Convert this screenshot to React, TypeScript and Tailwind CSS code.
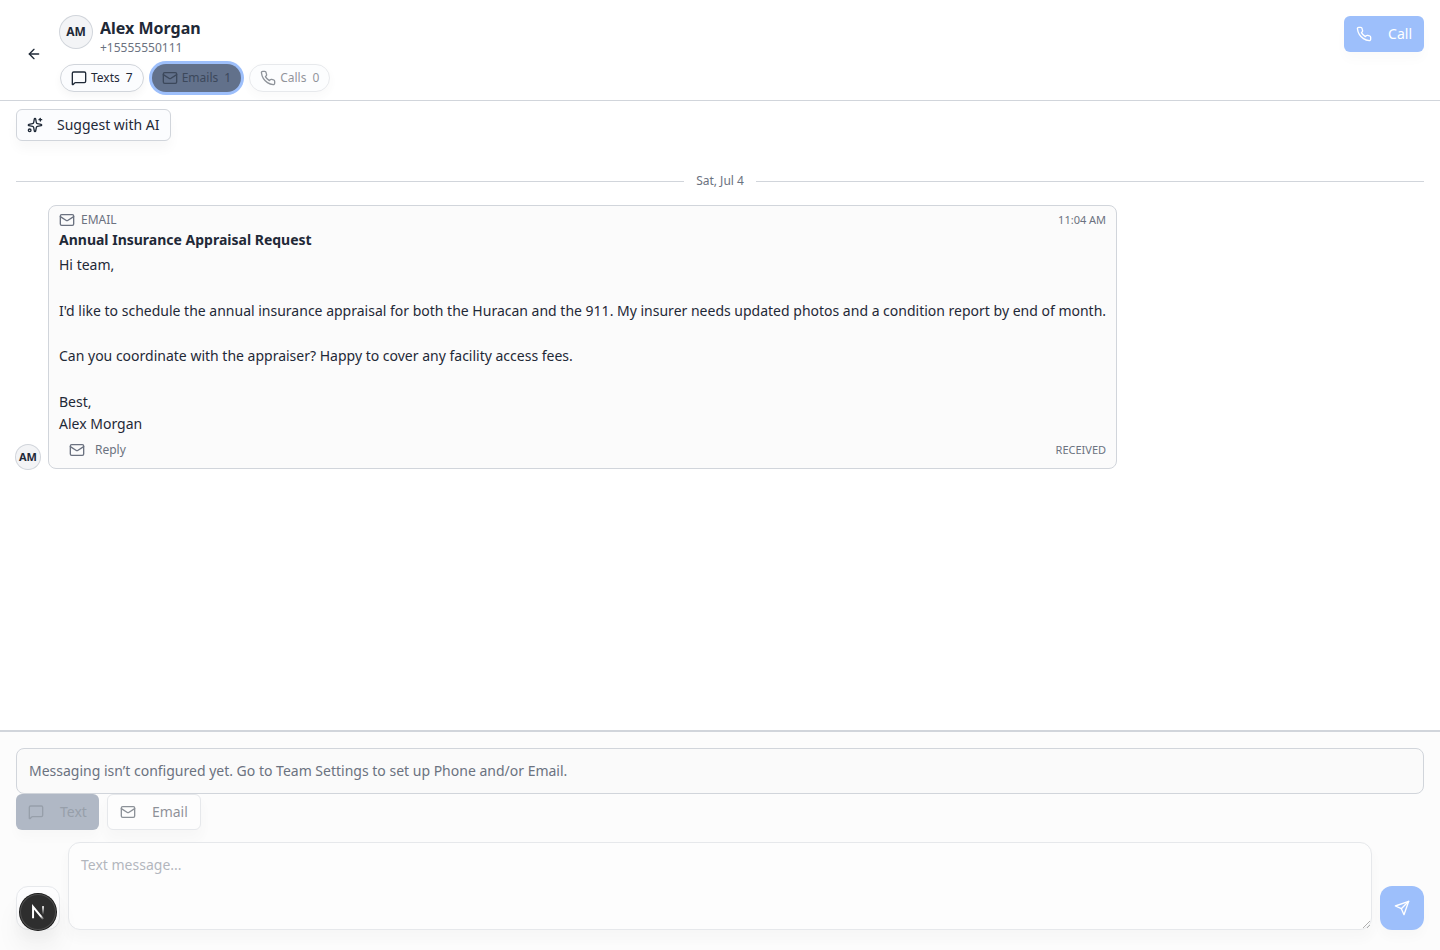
import type { ReactNode } from 'react';
import { ArrowLeft, Sparkles } from 'lucide-react';

interface IconProps {
  className?: string;
}

function Icon({ className = 'size-4', children }: IconProps & { children: ReactNode }) {
  return (
    <svg
      viewBox="0 0 24 24"
      fill="none"
      stroke="currentColor"
      strokeWidth={2}
      strokeLinecap="round"
      strokeLinejoin="round"
      aria-hidden="true"
      className={`shrink-0 ${className}`}
    >
      {children}
    </svg>
  );
}

function MessageIcon({ className }: IconProps) {
  return (
    <Icon className={className}>
      <path d="M22 17a2 2 0 0 1-2 2H6.828a2 2 0 0 0-1.414.586l-2.202 2.202A.71.71 0 0 1 2 21.286V5a2 2 0 0 1 2-2h16a2 2 0 0 1 2 2z" />
    </Icon>
  );
}

function MailIcon({ className }: IconProps) {
  return (
    <Icon className={className}>
      <path d="m22 7-8.991 5.727a2 2 0 0 1-2.009 0L2 7" />
      <rect x="2" y="4" width="20" height="16" rx="2" />
    </Icon>
  );
}

function PhoneIcon({ className }: IconProps) {
  return (
    <Icon className={className}>
      <path d="M22 16.92v3a2 2 0 0 1-2.18 2 19.79 19.79 0 0 1-8.63-3.07 19.5 19.5 0 0 1-6-6 19.79 19.79 0 0 1-3.07-8.67A2 2 0 0 1 4.11 2h3a2 2 0 0 1 2 1.72c.127.96.361 1.903.7 2.81a2 2 0 0 1-.45 2.11L8.09 9.91a16 16 0 0 0 6 6l1.27-1.27a2 2 0 0 1 2.11-.45c.907.339 1.85.573 2.81.7A2 2 0 0 1 22 16.92z" />
    </Icon>
  );
}

function SendIcon({ className }: IconProps) {
  return (
    <Icon className={className}>
      <path d="m22 2-7 20-4-9-9-4Z" />
      <path d="M22 2 11 13" />
    </Icon>
  );
}

function ThreadHeader() {
  return (
    <header className="flex items-start border-b border-[#d1d5db] bg-white px-4 pt-4 pb-2">
      <button
        type="button"
        aria-label="Back"
        className="mr-2 flex size-9 shrink-0 items-center justify-center self-center rounded-md"
      >
        <ArrowLeft className="size-4" />
      </button>
      <div className="flex min-w-0 flex-1 flex-col gap-2">
        <div className="flex items-start gap-2">
          <span className="flex size-8 shrink-0 items-center justify-center rounded-full bg-[#f3f4f6] text-xs font-bold ring-1 ring-[#d1d5db]">
            AM
          </span>
          <div className="min-w-0">
            <h1 className="truncate text-base leading-6 font-bold">Alex Morgan</h1>
            <p className="text-xs text-[#6b7280]">+15555550111</p>
          </div>
        </div>
        <div className="flex gap-2">
          <button
            type="button"
            className="flex h-7 items-center gap-1 rounded-full border border-[#d1d5db] bg-[#fbfcfe] px-2.5 text-xs shadow-[0_4px_8px_rgba(0,0,0,0.04)]"
          >
            <MessageIcon />
            <span>Texts</span>
            <span className="ml-0.5">7</span>
          </button>
          <button
            type="button"
            className="flex h-7 items-center gap-1 rounded-full bg-[#62718b] px-2.5 text-xs text-[#3c485b] ring-3 ring-[#9dbffb]"
          >
            <MailIcon />
            <span>Emails</span>
            <span className="ml-0.5">1</span>
          </button>
          <button
            type="button"
            disabled
            className="flex h-7 items-center gap-1 rounded-full border border-[#d1d5db] bg-[#fbfcfe] px-2.5 text-xs opacity-50 shadow-[0_4px_8px_rgba(0,0,0,0.04)]"
          >
            <PhoneIcon />
            <span>Calls</span>
            <span className="ml-0.5">0</span>
          </button>
        </div>
      </div>
      <button
        type="button"
        disabled
        className="flex h-9 items-center gap-4 rounded-md bg-[#9dbffb] px-3 text-sm text-white shadow-[0_8px_12px_rgba(0,0,0,0.02)]"
      >
        <PhoneIcon />
        Call
      </button>
    </header>
  );
}

function DateDivider({ label }: { label: string }) {
  return (
    <div className="flex items-center gap-3">
      <div className="h-px flex-1 bg-[#d1d5db]" />
      <span className="text-xs text-[#6b7280]">{label}</span>
      <div className="h-px flex-1 bg-[#d1d5db]" />
    </div>
  );
}

const emailBody = `Hi team,

I'd like to schedule the annual insurance appraisal for both the Huracan and the 911. My insurer needs updated photos and a condition report by end of month.

Can you coordinate with the appraiser? Happy to cover any facility access fees.

Best,
Alex Morgan`;

function EmailMessage() {
  return (
    <div className="flex items-end gap-2">
      <span className="flex size-6 shrink-0 items-center justify-center rounded-full bg-[#f3f4f6] text-[11px] font-bold ring-1 ring-[#d1d5db]">
        AM
      </span>
      <article className="rounded-lg border border-[#d1d5db] bg-[#fbfbfb] px-2.5 py-1.5">
        <div className="flex items-center gap-1.5 text-xs text-[#6b7280]">
          <MailIcon />
          <span>EMAIL</span>
          <time className="ml-auto text-[11px]">11:04 AM</time>
        </div>
        <h2 className="mt-0.5 text-sm font-bold">Annual Insurance Appraisal Request</h2>
        <p className="mt-1 text-sm leading-relaxed whitespace-pre-wrap">{emailBody}</p>
        <div className="mt-0.5 flex items-center justify-between text-[#6b7280]">
          <button type="button" className="flex h-6 items-center gap-2.5 px-2.5 text-xs">
            <MailIcon />
            Reply
          </button>
          <span className="text-[11px]">RECEIVED</span>
        </div>
      </article>
    </div>
  );
}

function Composer() {
  return (
    <footer className="border-t-2 border-[#d1d5db] bg-[#fcfcfc] px-4 pt-4 pb-5">
      <div className="rounded-lg border border-[#d1d5db] bg-[#fafafa] p-3 text-sm text-[#6b7280]">
        Messaging isn’t configured yet. Go to Team Settings to set up Phone and/or Email.
      </div>
      <div className="mb-3 flex gap-2">
        <button
          type="button"
          disabled
          className="flex h-9 items-center gap-4 rounded-md bg-[#b0b8c5] px-3 text-sm text-[#979faa] shadow-[0_8px_12px_rgba(0,0,0,0.02)]"
        >
          <MessageIcon />
          Text
        </button>
        <button
          type="button"
          disabled
          className="flex h-9 items-center gap-4 rounded-md border border-[#d1d5db] bg-white px-3 text-sm opacity-50 shadow-[0_8px_12px_rgba(0,0,0,0.04)]"
        >
          <MailIcon />
          Email
        </button>
      </div>
      <div className="flex items-end gap-2">
        <button
          type="button"
          disabled
          aria-label="Attach file"
          className="size-11 shrink-0 rounded-xl border border-[#e7e9ec] bg-[#fdfdfe] shadow-[0_8px_12px_rgba(0,0,0,0.02)]"
        />
        <textarea
          disabled
          aria-label="Text message"
          placeholder="Text message..."
          className="block h-22 min-w-0 flex-1 rounded-xl border border-[#d1d5db] bg-white px-3 py-3 text-sm leading-5 opacity-50 shadow-[0_8px_12px_rgba(0,0,0,0.04)] placeholder:text-[#6b7280]"
        />
        <button
          type="button"
          disabled
          aria-label="Send"
          className="flex size-11 shrink-0 items-center justify-center rounded-xl bg-[#9dbffb] text-white shadow-[0_8px_12px_rgba(0,0,0,0.02)]"
        >
          <SendIcon />
        </button>
      </div>
    </footer>
  );
}

function DevIndicator() {
  return (
    <button
      type="button"
      aria-label="Open dev tools"
      className="fixed bottom-5 left-5 flex size-9 items-center justify-center rounded-full bg-[#2e2e2e] shadow-[0_0_0_1px_#171717,inset_0_0_0_1px_#4d4d4d,0_16px_32px_-8px_rgba(0,0,0,0.24)]"
    >
      <svg viewBox="0 0 40 40" fill="none" aria-hidden="true" className="size-9">
        <defs>
          <linearGradient id="dev-diagonal" x1="20" y1="20" x2="26" y2="29" gradientUnits="userSpaceOnUse">
            <stop offset="0.5" stopColor="#fff" />
            <stop offset="1" stopColor="#fff" stopOpacity="0" />
          </linearGradient>
          <linearGradient id="dev-stem" x1="26" y1="13" x2="26" y2="23" gradientUnits="userSpaceOnUse">
            <stop stopColor="#fff" />
            <stop offset="1" stopColor="#fff" stopOpacity="0" />
          </linearGradient>
        </defs>
        <path d="M14.5 27V14.2L25.8 28" stroke="url(#dev-diagonal)" strokeWidth="2.2" />
        <path d="M25.6 13.5V23.5" stroke="url(#dev-stem)" strokeWidth="2.2" />
      </svg>
    </button>
  );
}

export default function App() {
  return (
    <div className="flex min-h-screen flex-col bg-white font-['Noto_Sans',sans-serif] text-[#1f2937]">
      <ThreadHeader />
      <main className="flex flex-1 flex-col px-4 pt-2">
        <button
          type="button"
          className="flex h-8 items-center gap-3.5 self-start rounded-md border border-[#d1d5db] bg-[#fbfcfe] px-2.5 text-sm shadow-[0_8px_12px_rgba(0,0,0,0.03)]"
        >
          <Sparkles className="size-4" />
          Suggest with AI
        </button>
        <div className="mt-8 flex flex-col gap-4">
          <DateDivider label="Sat, Jul 4" />
          <EmailMessage />
        </div>
      </main>
      <Composer />
      <DevIndicator />
    </div>
  );
}
